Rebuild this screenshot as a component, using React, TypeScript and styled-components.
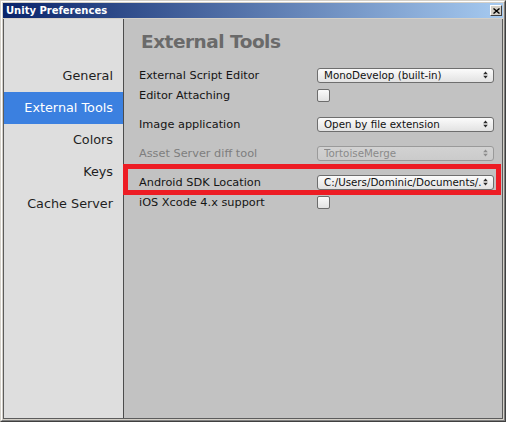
import * as React from "react";
import styled, { createGlobalStyle } from "styled-components";

const GlobalStyle = createGlobalStyle`
  html, body {
    margin: 0;
    padding: 0;
    background: #d4d0c8;
  }
  body {
    font-family: "DejaVu Sans", Verdana, sans-serif;
  }
`;

const Window = styled.div`
  box-sizing: border-box;
  width: 506px;
  height: 422px;
  display: flex;
  border: 1px solid;
  border-color: #d4d0c8 #404040 #404040 #d4d0c8;
`;

const Frame = styled.div`
  flex: 1;
  display: flex;
  flex-direction: column;
  border: 1px solid;
  border-color: #ffffff #808080 #808080 #ffffff;
  background: #d4d0c8;
  padding: 1px;
  min-height: 0;
`;

const TitleBar = styled.div`
  height: 15px;
  margin-bottom: 1px;
  display: flex;
  align-items: center;
  justify-content: space-between;
  padding: 0 1px 0 3px;
  background: linear-gradient(to right, #0a246a, #a6caf0);
`;

const TitleText = styled.span`
  color: #ffffff;
  font-weight: bold;
  font-size: 10px;
  line-height: 15px;
`;

const CloseButton = styled.div`
  box-sizing: border-box;
  width: 12px;
  height: 11px;
  display: flex;
  align-items: center;
  justify-content: center;
  background: #d4d0c8;
  border: 1px solid;
  border-color: #ffffff #404040 #404040 #ffffff;
`;

const Body = styled.div`
  flex: 1;
  display: flex;
  min-height: 0;
  border: 1px solid #5c5c5c;
  border-top: none;
`;

const Sidebar = styled.div`
  width: 119px;
  flex-shrink: 0;
  background: #dedede;
  border-right: 1px solid #4c4c4c;
  padding-top: 41px;
`;

const NavItem = styled.div<{ $active?: boolean }>`
  height: 32px;
  line-height: 32px;
  text-align: right;
  padding-right: 10px;
  font-size: 12.8px;
  color: ${({ $active }) => ($active ? "#ffffff" : "#1e1e1e")};
  background: ${({ $active }) => ($active ? "#3b80e0" : "transparent")};
`;

const Panel = styled.div`
  flex: 1;
  background: #c2c2c2;
  padding: 10px 8px 0 15px;
`;

const Heading = styled.h1`
  margin: 0 0 10px 2px;
  font-size: 18.5px;
  line-height: 26px;
  font-weight: bold;
  letter-spacing: -0.5px;
  color: #6a6a6a;
`;

const Row = styled.div<{ $spaced?: boolean; $marked?: boolean }>`
  position: relative;
  display: grid;
  grid-template-columns: 178px 177px;
  align-items: center;
  height: 20px;
  margin-top: ${({ $spaced }) => ($spaced ? "9px" : "0")};

  ${({ $marked }) =>
    $marked &&
    `
    &::after {
      content: "";
      position: absolute;
      top: -8px;
      bottom: -3px;
      left: -16px;
      right: -7px;
      border: 5px solid #ed1c24;
      pointer-events: none;
    }
  `}
`;

const Label = styled.span<{ $disabled?: boolean }>`
  font-size: 11.3px;
  white-space: nowrap;
  color: ${({ $disabled }) => ($disabled ? "#7e7e7e" : "#141414")};
`;

const Popup = styled.div<{ $disabled?: boolean }>`
  box-sizing: border-box;
  height: 15px;
  display: flex;
  align-items: center;
  padding: 0 5px 0 6px;
  border: 1px solid ${({ $disabled }) => ($disabled ? "#9a9a9a" : "#6e6e6e")};
  border-radius: 3px;
  background: ${({ $disabled }) =>
    $disabled
      ? "linear-gradient(#d2d2d2, #cbcbcb)"
      : "linear-gradient(#fbfbfb, #e2e2e2)"};
  color: ${({ $disabled }) => ($disabled ? "#8a8a8a" : "#111111")};
  font-size: 10.3px;
  overflow: hidden;
`;

// long paths are clipped against the arrows, as the editor does
const PopupText = styled.span`
  flex: 1;
  white-space: nowrap;
  overflow: hidden;
  min-width: 0;
`;

const Arrows = styled.svg`
  flex-shrink: 0;
  margin-left: 1px;
`;

const Checkbox = styled.div`
  box-sizing: border-box;
  width: 13px;
  height: 13px;
  border: 1px solid #6c6c6c;
  border-radius: 2px;
  background: linear-gradient(#fafafa, #e2e2e2);
`;

type Field =
  | { label: string; kind: "popup"; value: string; disabled?: boolean; spaced?: boolean; marked?: boolean }
  | { label: string; kind: "toggle"; spaced?: boolean };

const fields: Field[] = [
  { label: "External Script Editor", kind: "popup", value: "MonoDevelop (built-in)" },
  { label: "Editor Attaching", kind: "toggle" },
  { label: "Image application", kind: "popup", value: "Open by file extension", spaced: true },
  { label: "Asset Server diff tool", kind: "popup", value: "TortoiseMerge", disabled: true, spaced: true },
  {
    label: "Android SDK Location",
    kind: "popup",
    value: "C:/Users/Dominic/Documents/.",
    spaced: true,
    marked: true,
  },
  { label: "iOS Xcode 4.x support", kind: "toggle" },
];

const sections = ["General", "External Tools", "Colors", "Keys", "Cache Server"];

const UpDown = ({ color }: { color: string }) => (
  <Arrows width="5" height="8" viewBox="0 0 5 8">
    <path d="M2.5 0.5 L4.8 3.2 L0.2 3.2 Z" fill={color} />
    <path d="M2.5 7.5 L4.8 4.8 L0.2 4.8 Z" fill={color} />
  </Arrows>
);

const App: React.FC = () => {
  return (
    <>
      <GlobalStyle />
      <Window>
        <Frame>
          <TitleBar>
            <TitleText>Unity Preferences</TitleText>
            <CloseButton>
              <svg width="7" height="6" viewBox="0 0 7 6">
                <path d="M0.5 0.5 L6.5 5.5 M6.5 0.5 L0.5 5.5" stroke="#000" strokeWidth="1.4" />
              </svg>
            </CloseButton>
          </TitleBar>
          <Body>
            <Sidebar>
              {sections.map((s) => (
                <NavItem key={s} $active={s === "External Tools"}>
                  {s}
                </NavItem>
              ))}
            </Sidebar>
            <Panel>
              <Heading>External Tools</Heading>
              {fields.map((f) => (
                <Row
                  key={f.label}
                  $spaced={f.spaced}
                  $marked={f.kind === "popup" && f.marked}
                >
                  <Label $disabled={f.kind === "popup" && f.disabled}>{f.label}</Label>
                  {f.kind === "popup" ? (
                    <Popup $disabled={f.disabled}>
                      <PopupText>{f.value}</PopupText>
                      <UpDown color={f.disabled ? "#8c8c8c" : "#2a2a2a"} />
                    </Popup>
                  ) : (
                    <Checkbox />
                  )}
                </Row>
              ))}
            </Panel>
          </Body>
        </Frame>
      </Window>
    </>
  );
};

export default App;
